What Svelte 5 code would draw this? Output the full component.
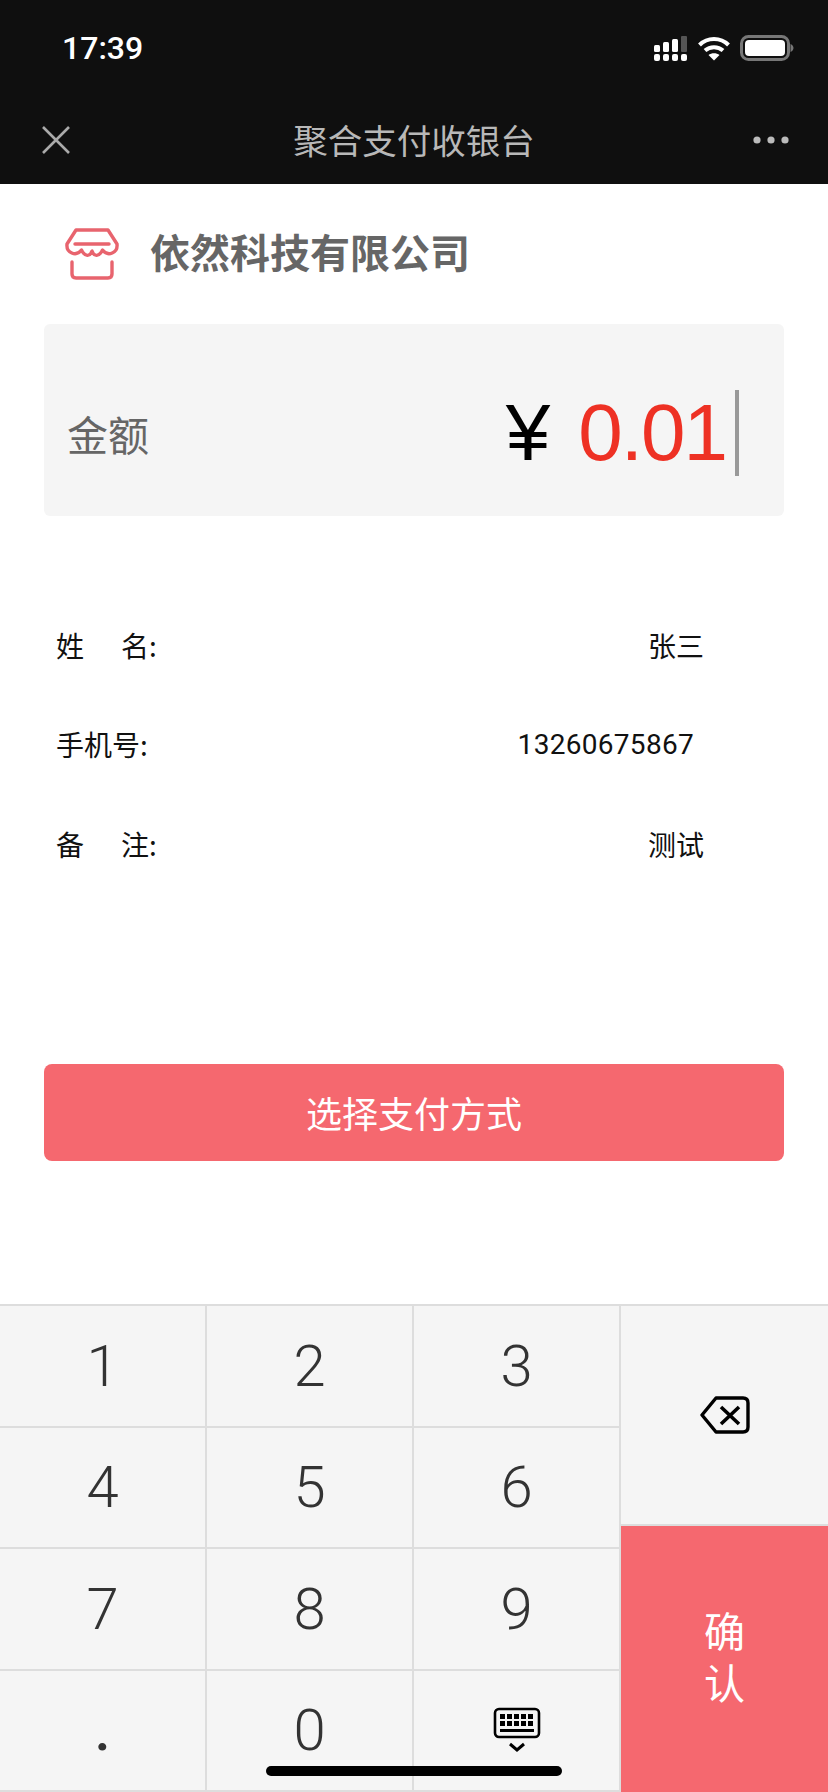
<script>
  const rows = [
    { label: "姓", label2: "名", value: "张三" },
    { label: "手机号", value: "13260675867", num: true },
    { label: "备", label2: "注", value: "测试" },
  ];
  const keys = ["1", "2", "3", "4", "5", "6", "7", "8", "9", ".", "0"];
</script>

<div class="page">
  <header>
    <div class="status">
      <span class="time">17:39</span>
      <div class="status-icons">
        <svg width="34" height="27" viewBox="0 0 34 27" fill="#fff">
          <rect x="0" y="10" width="6" height="7" rx="1.5" />
          <rect x="9" y="7" width="6" height="10" rx="1.5" />
          <rect x="18" y="4" width="6" height="13" rx="1.5" />
          <rect x="27" y="1" width="6" height="16" rx="1" fill="#555" />
          <rect x="0" y="19" width="6" height="7" rx="2" />
          <rect x="9" y="19" width="6" height="7" rx="2" />
          <rect x="18" y="19" width="6" height="7" rx="2" />
          <rect x="27" y="19" width="6" height="7" rx="2" />
        </svg>
        <svg width="32" height="25" viewBox="0 0 32 25" fill="none" stroke="#fff" stroke-width="4">
          <path d="M1.5 9 C9.5 1 22.5 1 30.5 9" />
          <path d="M7 14.5 C12 10 20 10 25 14.5" />
          <path d="M16 24.5 L10.5 19 C13.5 16.5 18.5 16.5 21.5 19 Z" fill="#fff" stroke="none" />
        </svg>
        <svg width="54" height="26" viewBox="0 0 54 26">
          <rect x="1.5" y="1.5" width="47" height="23" rx="7" fill="none" stroke="#777" stroke-width="3" />
          <rect x="5" y="5" width="40" height="16" rx="4" fill="#fff" />
          <path d="M50.5 9 C52.5 10 53.5 11.5 53.5 13 C53.5 14.5 52.5 16 50.5 17 Z" fill="#777" />
        </svg>
      </div>
    </div>
    <div class="nav">
      <svg class="close" width="30" height="30" viewBox="0 0 30 30" stroke="#aaa" stroke-width="2.6" fill="none">
        <path d="M2 2 L28 28 M28 2 L2 28" />
      </svg>
      <span class="title">聚合支付收银台</span>
      <svg class="more" width="36" height="8" viewBox="0 0 36 8" fill="#bbb">
        <circle cx="4" cy="4" r="3.6" />
        <circle cx="18" cy="4" r="3.6" />
        <circle cx="32" cy="4" r="3.6" />
      </svg>
    </div>
  </header>

  <div class="merchant">
    <svg width="54" height="52" viewBox="0 0 54 52" fill="none" stroke="#e8646e" stroke-width="3.4" stroke-linecap="round" stroke-linejoin="round">
      <path d="M11 2 H43 L52 16 C53 25 43 29 37.5 22 C34 29 29 29 27 23 C25 29 20 29 16.5 22 C11 29 1 25 2 16 Z" />
      <path d="M10 16 H44" />
      <path d="M7 34 V46 Q7 50 11 50 H43 Q47 50 47 46 V34" />
    </svg>
    <span class="company">依然科技有限公司</span>
  </div>

  <div class="amount">
    <span class="amount-label">金额</span>
    <div class="amount-value">
      <span class="yen">¥</span>
      <span class="money">0.01</span>
      <span class="cursor"></span>
    </div>
  </div>

  <div class="info">
    {#each rows as row}
      <div class="row">
        <span class="row-label">
          {#if row.label2}
            <span class="spaced">{row.label}</span>{row.label2}:
          {:else}
            {row.label}:
          {/if}
        </span>
        <span class="row-value" class:num={row.num}>{row.value}</span>
      </div>
    {/each}
  </div>

  <button class="pay">选择支付方式</button>

  <div class="keyboard">
    <div class="keys">
      {#each keys as k}
        <div class="key" class:dot={k === "."}>{k}</div>
      {/each}
      <div class="key">
        <svg class="kb-icon" width="48" height="46" viewBox="0 0 48 46" fill="none" stroke="#000">
          <rect x="2" y="2" width="44" height="28" rx="4" stroke-width="2.6" />
          <g fill="#000" stroke="none">
            <rect x="7" y="7" width="5" height="5" /><rect x="14" y="7" width="5" height="5" />
            <rect x="21" y="7" width="5" height="5" /><rect x="28" y="7" width="5" height="5" />
            <rect x="35" y="7" width="5" height="5" /><rect x="7" y="14" width="5" height="5" />
            <rect x="14" y="14" width="5" height="5" /><rect x="21" y="14" width="5" height="5" />
            <rect x="28" y="14" width="5" height="5" /><rect x="35" y="14" width="5" height="5" />
            <rect x="7" y="22" width="34" height="3" />
          </g>
          <path d="M17 37 L24 43 L31 37" stroke-width="3" />
        </svg>
      </div>
    </div>
    <div class="side">
      <div class="backspace">
        <svg width="50" height="38" viewBox="0 0 50 38" fill="none" stroke="#000" stroke-width="3.4">
          <path d="M16 2 H43 Q48 2 48 7 V31 Q48 36 43 36 H16 L2 19 Z" stroke-linejoin="round" />
          <path d="M21 11 L39 28 M39 11 L21 28" stroke-width="3.6" />
        </svg>
      </div>
      <button class="confirm"><span>确</span><span>认</span></button>
    </div>
  </div>

  <div class="home-bar"></div>
</div>

<style>
  :global(body) {
    margin: 0;
    background: #fff;
  }
  .page {
    position: relative;
    width: 828px;
    height: 1792px;
    display: flex;
    flex-direction: column;
    overflow: hidden;
    font-family: "Liberation Sans", "Noto Sans CJK SC", sans-serif;
    color: #111;
  }
  header {
    height: 184px;
    background: #0f0f0f;
    flex-shrink: 0;
  }
  .status {
    height: 96px;
    display: flex;
    align-items: center;
    justify-content: space-between;
    padding: 0 34px 0 62px;
    box-sizing: border-box;
  }
  .time {
    font-family: Roboto, sans-serif;
    font-size: 32px;
    font-weight: 500;
    color: #fff;
  }
  .status-icons {
    display: flex;
    align-items: center;
    gap: 10px;
  }
  .nav {
    position: relative;
    height: 88px;
    display: flex;
    align-items: center;
    justify-content: space-between;
    padding: 0 39px 0 41px;
  }
  .title {
    position: absolute;
    left: 0;
    right: 0;
    top: 19px;
    text-align: center;
    font-size: 34.5px;
    line-height: 48px;
    color: #b8b8b8;
    font-family: "Noto Sans CJK SC", sans-serif;
  }
  .merchant {
    height: 140px;
    display: flex;
    align-items: center;
    gap: 31px;
    padding-left: 65px;
    flex-shrink: 0;
  }
  .company {
    font-size: 40px;
    font-weight: 700;
    line-height: 48px;
    margin-bottom: 6px;
    color: #666;
    font-family: "Noto Sans CJK SC", sans-serif;
  }
  .amount {
    margin: 0 44px;
    height: 192px;
    background: #f5f5f5;
    border-radius: 6px;
    display: flex;
    align-items: center;
    justify-content: space-between;
    padding: 26px 45px 0 23px;
    box-sizing: border-box;
    flex-shrink: 0;
  }
  .amount-label {
    font-size: 41px;
    color: #666;
    font-family: "Noto Sans CJK SC", sans-serif;
  }
  .amount-value {
    display: flex;
    align-items: center;
  }
  .yen {
    font-family: "Liberation Sans", sans-serif;
    font-size: 80px;
    color: #000;
    margin-right: 28px;
  }
  .money {
    font-family: "Liberation Sans", sans-serif;
    font-size: 80px;
    letter-spacing: -2px;
    color: #ee3124;
  }
  .cursor {
    width: 4px;
    height: 86px;
    background: #999;
    margin-left: 9px;
  }
  .info {
    margin-top: 79px;
    flex-shrink: 0;
  }
  .row {
    height: 99.5px;
    display: flex;
    align-items: center;
    justify-content: space-between;
    padding: 0 124px 0 56px;
    font-size: 28px;
    font-family: "Noto Sans CJK SC", sans-serif;
  }
  .spaced {
    margin-right: 37px;
  }
  .row-value.num {
    font-family: Roboto, sans-serif;
    font-size: 28px;
    letter-spacing: 0.3px;
    margin-right: 10px;
  }
  .pay {
    margin: 170px 44px 0;
    height: 97px;
    background: #f5686f;
    border: none;
    border-radius: 8px;
    color: #fff;
    font-size: 36px;
    font-family: "Noto Sans CJK SC", sans-serif;
    flex-shrink: 0;
  }
  .keyboard {
    margin-top: auto;
    height: 488px;
    box-sizing: border-box;
    border-top: 2px solid #ddd;
    background: #f5f5f5;
    display: flex;
    flex-shrink: 0;
  }
  .keys {
    width: 621px;
    display: grid;
    grid-template-columns: 207px 207px 207px;
    grid-auto-rows: 121.5px;
  }
  .key {
    box-sizing: border-box;
    border-right: 2px solid #ddd;
    border-bottom: 2px solid #ddd;
    display: flex;
    align-items: center;
    justify-content: center;
    font-family: Roboto, sans-serif;
    font-weight: 350;
    font-size: 58px;
    color: #333;
  }
  .key.dot {
    font-weight: 500;
  }
  .side {
    flex: 1;
    display: flex;
    flex-direction: column;
  }
  .backspace {
    height: 220px;
    display: flex;
    align-items: center;
    justify-content: center;
    box-sizing: border-box;
    border-bottom: 2px solid #ddd;
  }
  .confirm {
    flex: 1;
    background: #f5686f;
    border: none;
    padding: 0;
    color: #fff;
    font-size: 41px;
    line-height: 52px;
    font-family: "Liberation Sans", "Noto Sans CJK SC", sans-serif;
    display: flex;
    flex-direction: column;
    align-items: center;
    justify-content: center;
    box-sizing: border-box;
  }
  .home-bar {
    position: absolute;
    left: 266px;
    bottom: 16px;
    width: 296px;
    height: 10px;
    border-radius: 5px;
    background: #000;
  }
</style>
